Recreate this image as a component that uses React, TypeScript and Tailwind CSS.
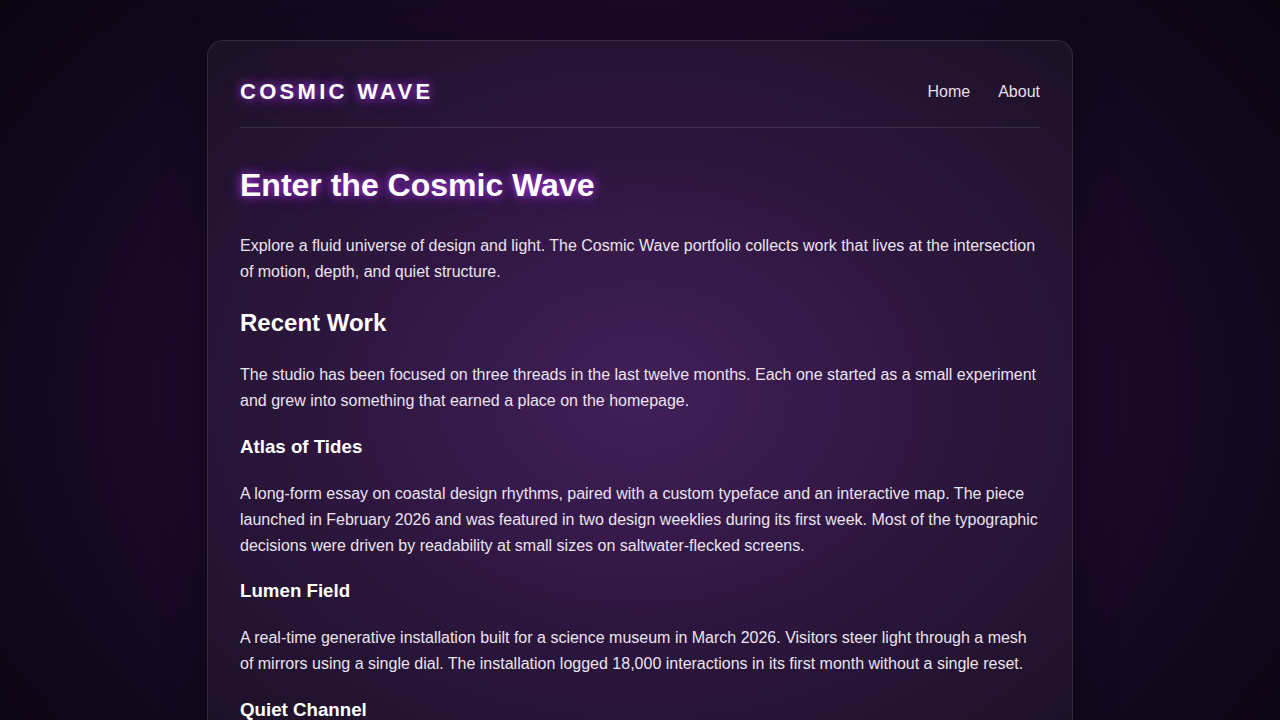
export default function App() {
  const glow = "[text-shadow:0_0_10px_rgba(185,60,255,0.85),0_0_18px_rgba(160,40,230,0.45)]";

  return (
    <div className="min-h-screen w-full bg-[radial-gradient(ellipse_at_50%_45%,#3a1552_0%,#240c36_35%,#12071c_70%,#08040c_100%)] font-['Liberation_Sans',Arial,sans-serif] text-[#ebe3f0]">
      <div className="flex justify-center pt-10 pb-10">
        <div className="w-[866px] rounded-2xl border border-white/10 bg-white/[0.045] px-8 pt-8 pb-10 shadow-[0_10px_40px_rgba(0,0,0,0.45)]">
          <header className="flex items-center justify-between border-b border-white/10 pb-[18px] pt-[2px]">
            <div className={`text-[22px] font-bold uppercase leading-[34px] tracking-[0.15em] text-white ${glow}`}>
              Cosmic Wave
            </div>
            <nav className="flex items-center gap-7 text-base text-[#e6dfec]">
              <a href="#">Home</a>
              <a href="#">About</a>
            </nav>
          </header>

          <main>
            <h1 className={`mt-[38px] text-[32px] font-bold leading-[38px] text-white ${glow}`}>
              Enter the Cosmic Wave
            </h1>
            <p className="mt-[29px] text-base leading-[26px]">
              Explore a fluid universe of design and light. The Cosmic Wave portfolio collects work that lives at the
              intersection of motion, depth, and quiet structure.
            </p>

            <h2 className="mt-[24px] text-2xl font-bold leading-[28px] text-white">Recent Work</h2>
            <p className="mt-[25px] text-base leading-[26px]">
              The studio has been focused on three threads in the last twelve months. Each one started as a small
              experiment and grew into something that earned a place on the homepage.
            </p>

            <h3 className="mt-[22px] text-[18.72px] font-bold leading-[22px] text-white">Atlas of Tides</h3>
            <p className="mt-[23px] text-base leading-[26px]">
              A long-form essay on coastal design rhythms, paired with a custom typeface and an interactive map. The
              piece launched in February 2026 and was featured in two design weeklies during its first week. Most of
              the typographic decisions were driven by readability at small sizes on saltwater-flecked screens.
            </p>

            <h3 className="mt-[21px] text-[18.72px] font-bold leading-[22px] text-white">Lumen Field</h3>
            <p className="mt-[23px] text-base leading-[26px]">
              A real-time generative installation built for a science museum in March 2026. Visitors steer light
              through a mesh of mirrors using a single dial. The installation logged 18,000 interactions in its first
              month without a single reset.
            </p>

            <h3 className="mt-[22px] text-[18.72px] font-bold leading-[22px] text-white">Quiet Channel</h3>
            <p className="mt-[23px] text-base leading-[26px]">
              A slow-broadcast audio series recorded across four observatories, mixed for late-night listening and
              released one episode at a time.
            </p>
          </main>
        </div>
      </div>
    </div>
  );
}
